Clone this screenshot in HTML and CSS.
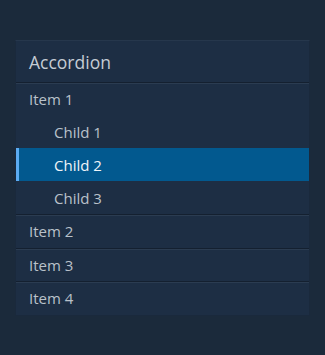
FILE: index.html
```html
<!DOCTYPE html>
<html>
<head>
<meta charset="utf-8">
<link rel="stylesheet" href="styles.css">
</head>
<body>
<div class="accordion">
  <div class="title">Accordion</div>
  <div class="item">
    <div class="head">Item 1</div>
    <div class="child">Child 1</div>
    <div class="child selected">Child 2</div>
    <div class="child">Child 3</div>
  </div>
  <div class="item"><div class="head">Item 2</div></div>
  <div class="item"><div class="head">Item 3</div></div>
  <div class="item"><div class="head">Item 4</div></div>
</div>
</body>
</html>
```
FILE: styles.css
```css
html, body {
  margin: 0;
  padding: 0;
  background: #1b2a3b;
  font-family: "Open Sans", "Noto Sans", sans-serif;
}
body {
  padding: 40px 15px 0 15px;
  height: 355px;
  box-sizing: border-box;
}
.accordion {
  width: 295px;
  box-sizing: border-box;
  background: #1d2e44;
  border-top: 1px solid #26374c;
  border-left: 1px solid #1a293c;
  border-right: 1px solid #1a293c;
  border-bottom: 1px solid #1a293c;
}
.title {
  height: 41px;
  display: flex;
  align-items: center;
  padding-left: 13px;
  font-size: 17.5px;
  color: #c5ccd4;
}
.item {
  border-top: 1px solid #142030;
}
.head {
  height: 32px;
  display: flex;
  align-items: center;
  padding-left: 13px;
  font-size: 15px;
  color: #b9c1ca;
  box-shadow: inset 0 1px 0 #2b3c51;
}
.item:nth-child(n+3) .head {
  height: 32.5px;
}
.child {
  height: 33px;
  display: flex;
  align-items: center;
  padding-left: 38px;
  font-size: 15px;
  color: #b9c1ca;
}
.child.selected {
  background: #02598f;
  color: #f0f4f8;
  box-shadow: inset 3px 0 0 #5cabf2;
}
```
